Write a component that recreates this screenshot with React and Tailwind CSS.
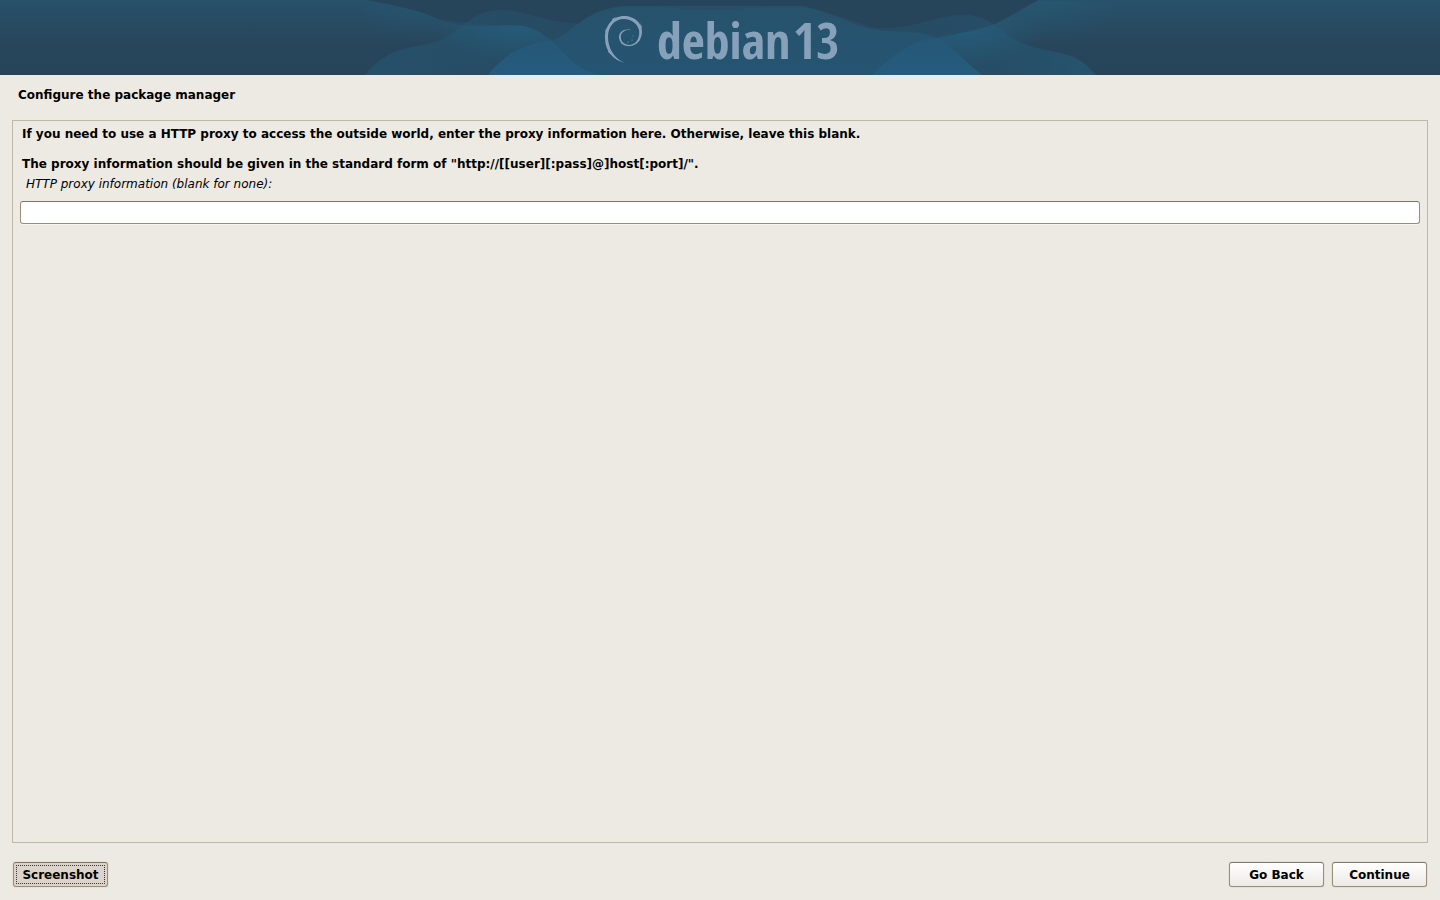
const ink = "#86a1b9";

function Swirl() {
  return (
    <g fill={ink}>
      <path d="M625 63C613 60 605 51 605 38C605 25 613 16 624 16C635 16 643 24 642 33C641 41 636 46 629 46C623 46 619 42 619 37C619 32 624 28 631 30C625 29 620 33 621 38C621 42 625 45 630 45C637 44 640 37 639 30C637 23 631 19 624 19C614 19 608 27 608 37C608 49 615 59 625 63Z" />
      <path d="M612 19L616 17L613 21ZM640 23L642 27L641 28ZM606 28L605 33L607 30ZM609 49L608 52L612 55Z" />
      <path d="M621 43C627 48 636 46 640 39" fill="none" stroke={ink} strokeWidth="0.6" />
      <circle cx="628" cy="42" r="0.6" />
      <circle cx="632" cy="40" r="0.6" />
      <circle cx="633" cy="36" r="0.5" />
    </g>
  );
}

function Waves() {
  return (
    <g>
      {/* wide bands coming in from both edges */}
      <path
        d="M0 0H366C392 5 420 10 440 20C455 26 470 27 500 25.5C525 24 535 27 552 41C570 60 577 69 600 75H0Z"
        fill="url(#band)"
      />
      <path
        d="M872 75C890 58 908 41 932 37C960 33 981 30 995 24C1015 15 1025 7 1038 1H1440V75Z"
        fill="url(#band)"
      />
      {/* low hills that overlap the bands */}
      <path
        d="M365 75C392 42 415 51 445 38C466 27 473 10 502 10C530 11 545 24 590 24V75Z"
        fill="url(#hillLeft)"
      />
      <path
        d="M860 27C915 33 930 15 965 15C996 16 997 35 1029 46C1060 55 1075 50 1096 75H860Z"
        fill="url(#hillRight)"
      />
      {/* middle wave behind the logo */}
      <path
        d="M488 75C508 50 528 45 545 42C575 37 580 6 633 6C675 6 675 10 715 10C750 9 780 6 805 8C840 13 855 29 885 31C905 32 922 31 937 38C955 48 965 62 982 75Z"
        fill="url(#middle)"
      />
      <path d="M488 75C508 50 528 45 552 41C570 60 577 69 600 75Z" fill="url(#crossing)" />
      <path d="M872 75C890 58 908 41 937 38C955 48 965 62 982 75Z" fill="url(#crossing)" />
    </g>
  );
}

function Banner() {
  return (
    <header className="flex h-[75px] shrink-0 justify-center overflow-hidden bg-linear-to-b from-[#28516a] to-[#27455a] to-60%">
      <svg
        className="h-[75px] w-[1440px] shrink-0"
        viewBox="0 0 1440 75"
        role="img"
        aria-label="debian 13"
      >
        <defs>
          <linearGradient id="band" x1="0" y1="0" x2="0" y2="1">
            <stop offset="0" stopColor="#28516a" />
            <stop offset="0.6" stopColor="#27465b" />
            <stop offset="1" stopColor="#27455a" />
          </linearGradient>
          <linearGradient id="hillLeft" x1="0" y1="0" x2="1" y2="0">
            <stop offset="0" stopColor="#255a78" stopOpacity="0.55" />
            <stop offset="0.35" stopColor="#255a78" stopOpacity="0.4" />
            <stop offset="1" stopColor="#255a78" stopOpacity="0.3" />
          </linearGradient>
          <linearGradient id="hillRight" x1="0" y1="0" x2="1" y2="0">
            <stop offset="0" stopColor="#255a78" stopOpacity="0.3" />
            <stop offset="0.6" stopColor="#255a78" stopOpacity="0.4" />
            <stop offset="1" stopColor="#255a78" stopOpacity="0.7" />
          </linearGradient>
          <linearGradient id="middle" x1="0" y1="0" x2="0" y2="1">
            <stop offset="0" stopColor="#27526c" />
            <stop offset="1" stopColor="#255572" />
          </linearGradient>
          <linearGradient id="crossing" x1="0" y1="0" x2="0" y2="1">
            <stop offset="0" stopColor="#265877" />
            <stop offset="1" stopColor="#255b7d" />
          </linearGradient>
          <radialGradient id="glow">
            <stop offset="0" stopColor="#25607f" stopOpacity="0.7" />
            <stop offset="1" stopColor="#25607f" stopOpacity="0" />
          </radialGradient>
          <clipPath id="leftCrest">
            <path d="M366 0C392 5 420 10 440 20C455 26 470 27 500 25.5C525 24 535 27 552 41C540 43 508 50 488 75H366Z" />
          </clipPath>
          <clipPath id="rightCrest">
            <path d="M937 38C960 33 981 30 995 24C1015 15 1025 7 1038 1H1140V75H982C965 62 955 48 937 38Z" />
          </clipPath>
        </defs>
        <path
          d="M366 0C392 5 420 10 440 20L500 26L552 41L600 24L633 6H805L885 31L937 38L995 24L1038 0Z"
          fill="#27455a"
        />
        <Waves />
        <g clipPath="url(#leftCrest)">
          <ellipse cx="520" cy="26" rx="90" ry="36" fill="url(#glow)" />
          <ellipse cx="420" cy="8" rx="70" ry="34" fill="url(#glow)" opacity="0.4" />
        </g>
        <g clipPath="url(#rightCrest)">
          <ellipse cx="965" cy="32" rx="80" ry="34" fill="url(#glow)" />
          <ellipse cx="1040" cy="4" rx="80" ry="38" fill="url(#glow)" opacity="0.5" />
        </g>
        <Swirl />
        <g fill={ink} fontFamily="'Open Sans Condensed', 'Roboto Condensed', sans-serif" fontWeight="700">
          <text x="657" y="59" fontSize="50">
            debian
          </text>
          <text x="793" y="59" fontSize="50">
            13
          </text>
        </g>
      </svg>
    </header>
  );
}

function DialogButton({ children }) {
  return (
    <button
      type="button"
      className="h-[25px] w-[95px] rounded-[3px] border border-[#998c7c] border-t-[#7f7465] bg-linear-to-b from-white to-[#edeae5] text-[12px] font-bold shadow-[0_0_0_1px_#e6e1d9]"
    >
      {children}
    </button>
  );
}

export default function App() {
  return (
    <div className="flex min-h-screen flex-col bg-[#edeae3] font-['DejaVu_Sans',sans-serif] text-[12px] text-black">
      <Banner />
      <h1 className="px-[18px] pt-3 pb-[17px] font-bold leading-4">
        Configure the package manager
      </h1>
      <main className="mx-3 flex-1 border border-[#bfb8a8] px-[7px] pt-[5px]">
        <p className="px-0.5 font-bold leading-4">
          If you need to use a HTTP proxy to access the outside world, enter the proxy information
          here. Otherwise, leave this blank.
        </p>
        <p className="mt-[14px] px-0.5 font-bold leading-4">
          The proxy information should be given in the standard form of
          "http://[[user][:pass]@]host[:port]/".
        </p>
        <label htmlFor="proxy" className="mt-1 block px-1.5 italic leading-4">
          HTTP proxy information (blank for none):
        </label>
        <input
          id="proxy"
          type="text"
          className="mt-[9px] block h-[23px] w-full rounded-[3px] border border-[#998c7c] border-t-[#7f7465] bg-white px-1 shadow-[0_1px_0_#f8f6f3]"
        />
      </main>
      <footer className="flex items-center justify-between px-[13px] pt-[19px] pb-[13px]">
        <button
          type="button"
          className="h-[25px] w-[95px] rounded-[3px] border border-[#998c7c] border-t-[#7f7465] bg-[#dcd4cb] p-0.5 font-bold shadow-[0_0_0_1px_#e6e1d9]"
        >
          <span className="block border border-dotted border-[#3a3632] pt-px leading-4">
            Screenshot
          </span>
        </button>
        <div className="flex gap-2">
          <DialogButton>Go Back</DialogButton>
          <DialogButton>Continue</DialogButton>
        </div>
      </footer>
    </div>
  );
}
